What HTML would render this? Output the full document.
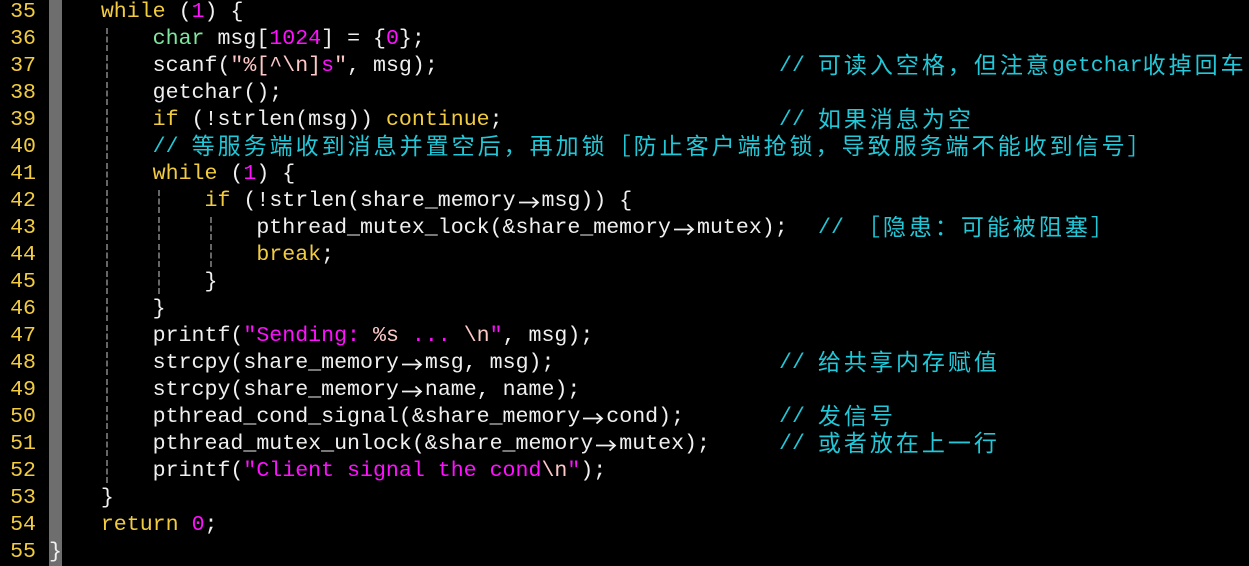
<!DOCTYPE html>
<html><head><meta charset="utf-8"><style>
html,body{margin:0;padding:0;background:#000;width:1249px;height:563px;overflow:hidden}
#w{position:absolute;left:0;top:-1px}
.l{position:relative;height:27px;line-height:27px;white-space:pre;font-family:"Liberation Mono",monospace;font-size:21.6px;color:#f0f0f0;overflow:visible}
.n{position:absolute;left:0;width:36px;text-align:right;color:#f2cc40}
.bar{position:absolute;left:49px;top:0;width:13px;height:27px;background:#6e6e6e}
.t{position:absolute;left:49px;top:0;height:27px}
.k{color:#f2cc40}.g{color:#7ee8a0}.m{color:#ff10ff}.p{color:#ffc8c8}.c{color:#22c8d8}
.cm{position:absolute;top:0;height:27px;color:#22c8d8}
.z{display:inline-block;vertical-align:top;position:relative;top:-3px;height:27px;line-height:27px;font-family:"Noto Sans CJK SC",sans-serif;font-size:23px;letter-spacing:3px}
.a{display:inline-block;width:26px;height:27px;vertical-align:top;position:relative}
.a svg{position:absolute;left:0;top:0}
.gd{position:absolute;top:2px;height:23px;border-left:2px dashed #666}
</style></head><body><div id="w">
<svg width="0" height="0" style="position:absolute"><defs><symbol id="ar" viewBox="0 0 26 27"><path d="M3 14.5H22M16.5 9.5l5.5 5-5.5 5" fill="none" stroke="#f0f0f0" stroke-width="1.8"/></symbol></defs></svg>
<div class="l"><span class="n">35</span><span class="bar"></span><span class="t">    <span class="k">while</span> (<span class="m">1</span>) {</span></div>
<div class="l"><span class="n">36</span><span class="bar"></span><i class="gd" style="left:106px"></i><span class="t">        <span class="g">char</span> msg[<span class="m">1024</span>] = {<span class="m">0</span>};</span></div>
<div class="l"><span class="n">37</span><span class="bar"></span><i class="gd" style="left:106px"></i><span class="t">        scanf(<span class="p">"%[^\n]</span><span class="m">s</span><span class="p">"</span>, msg);</span><span class="cm" style="left:779px">// <span class="z">可读入空格，但注意</span>getchar<span class="z">收掉回车</span></span></div>
<div class="l"><span class="n">38</span><span class="bar"></span><i class="gd" style="left:106px"></i><span class="t">        getchar();</span></div>
<div class="l"><span class="n">39</span><span class="bar"></span><i class="gd" style="left:106px"></i><span class="t">        <span class="k">if</span> (!strlen(msg)) <span class="k">continue</span>;</span><span class="cm" style="left:779px">// <span class="z">如果消息为空</span></span></div>
<div class="l"><span class="n">40</span><span class="bar"></span><i class="gd" style="left:106px"></i><span class="t">        <span class="c">// <span class="z">等服务端收到消息并置空后，再加锁［防止客户端抢锁，导致服务端不能收到信号］</span></span></span></div>
<div class="l"><span class="n">41</span><span class="bar"></span><i class="gd" style="left:106px"></i><span class="t">        <span class="k">while</span> (<span class="m">1</span>) {</span></div>
<div class="l"><span class="n">42</span><span class="bar"></span><i class="gd" style="left:106px"></i><i class="gd" style="left:158px"></i><span class="t">            <span class="k">if</span> (!strlen(share_memory<span class="a"><svg width="26" height="27"><use href="#ar"/></svg></span>msg)) {</span></div>
<div class="l"><span class="n">43</span><span class="bar"></span><i class="gd" style="left:106px"></i><i class="gd" style="left:158px"></i><i class="gd" style="left:210px"></i><span class="t">                pthread_mutex_lock(&amp;share_memory<span class="a"><svg width="26" height="27"><use href="#ar"/></svg></span>mutex);</span><span class="cm" style="left:818px">// <span class="z">［隐患：可能被阻塞］</span></span></div>
<div class="l"><span class="n">44</span><span class="bar"></span><i class="gd" style="left:106px"></i><i class="gd" style="left:158px"></i><i class="gd" style="left:210px"></i><span class="t">                <span class="k">break</span>;</span></div>
<div class="l"><span class="n">45</span><span class="bar"></span><i class="gd" style="left:106px"></i><i class="gd" style="left:158px"></i><span class="t">            }</span></div>
<div class="l"><span class="n">46</span><span class="bar"></span><i class="gd" style="left:106px"></i><span class="t">        }</span></div>
<div class="l"><span class="n">47</span><span class="bar"></span><i class="gd" style="left:106px"></i><span class="t">        printf(<span class="m">"Sending: </span><span class="p">%s</span><span class="m"> ... </span><span class="p">\n</span><span class="m">"</span>, msg);</span></div>
<div class="l"><span class="n">48</span><span class="bar"></span><i class="gd" style="left:106px"></i><span class="t">        strcpy(share_memory<span class="a"><svg width="26" height="27"><use href="#ar"/></svg></span>msg, msg);</span><span class="cm" style="left:779px">// <span class="z">给共享内存赋值</span></span></div>
<div class="l"><span class="n">49</span><span class="bar"></span><i class="gd" style="left:106px"></i><span class="t">        strcpy(share_memory<span class="a"><svg width="26" height="27"><use href="#ar"/></svg></span>name, name);</span></div>
<div class="l"><span class="n">50</span><span class="bar"></span><i class="gd" style="left:106px"></i><span class="t">        pthread_cond_signal(&amp;share_memory<span class="a"><svg width="26" height="27"><use href="#ar"/></svg></span>cond);</span><span class="cm" style="left:779px">// <span class="z">发信号</span></span></div>
<div class="l"><span class="n">51</span><span class="bar"></span><i class="gd" style="left:106px"></i><span class="t">        pthread_mutex_unlock(&amp;share_memory<span class="a"><svg width="26" height="27"><use href="#ar"/></svg></span>mutex);</span><span class="cm" style="left:779px">// <span class="z">或者放在上一行</span></span></div>
<div class="l"><span class="n">52</span><span class="bar"></span><i class="gd" style="left:106px"></i><span class="t">        printf(<span class="m">"Client signal the cond</span><span class="p">\n</span><span class="m">"</span>);</span></div>
<div class="l"><span class="n">53</span><span class="bar"></span><span class="t">    }</span></div>
<div class="l"><span class="n">54</span><span class="bar"></span><span class="t">    <span class="k">return</span> <span class="m">0</span>;</span></div>
<div class="l"><span class="n">55</span><span class="bar"></span><span class="t">}</span></div>
</div></body></html>
